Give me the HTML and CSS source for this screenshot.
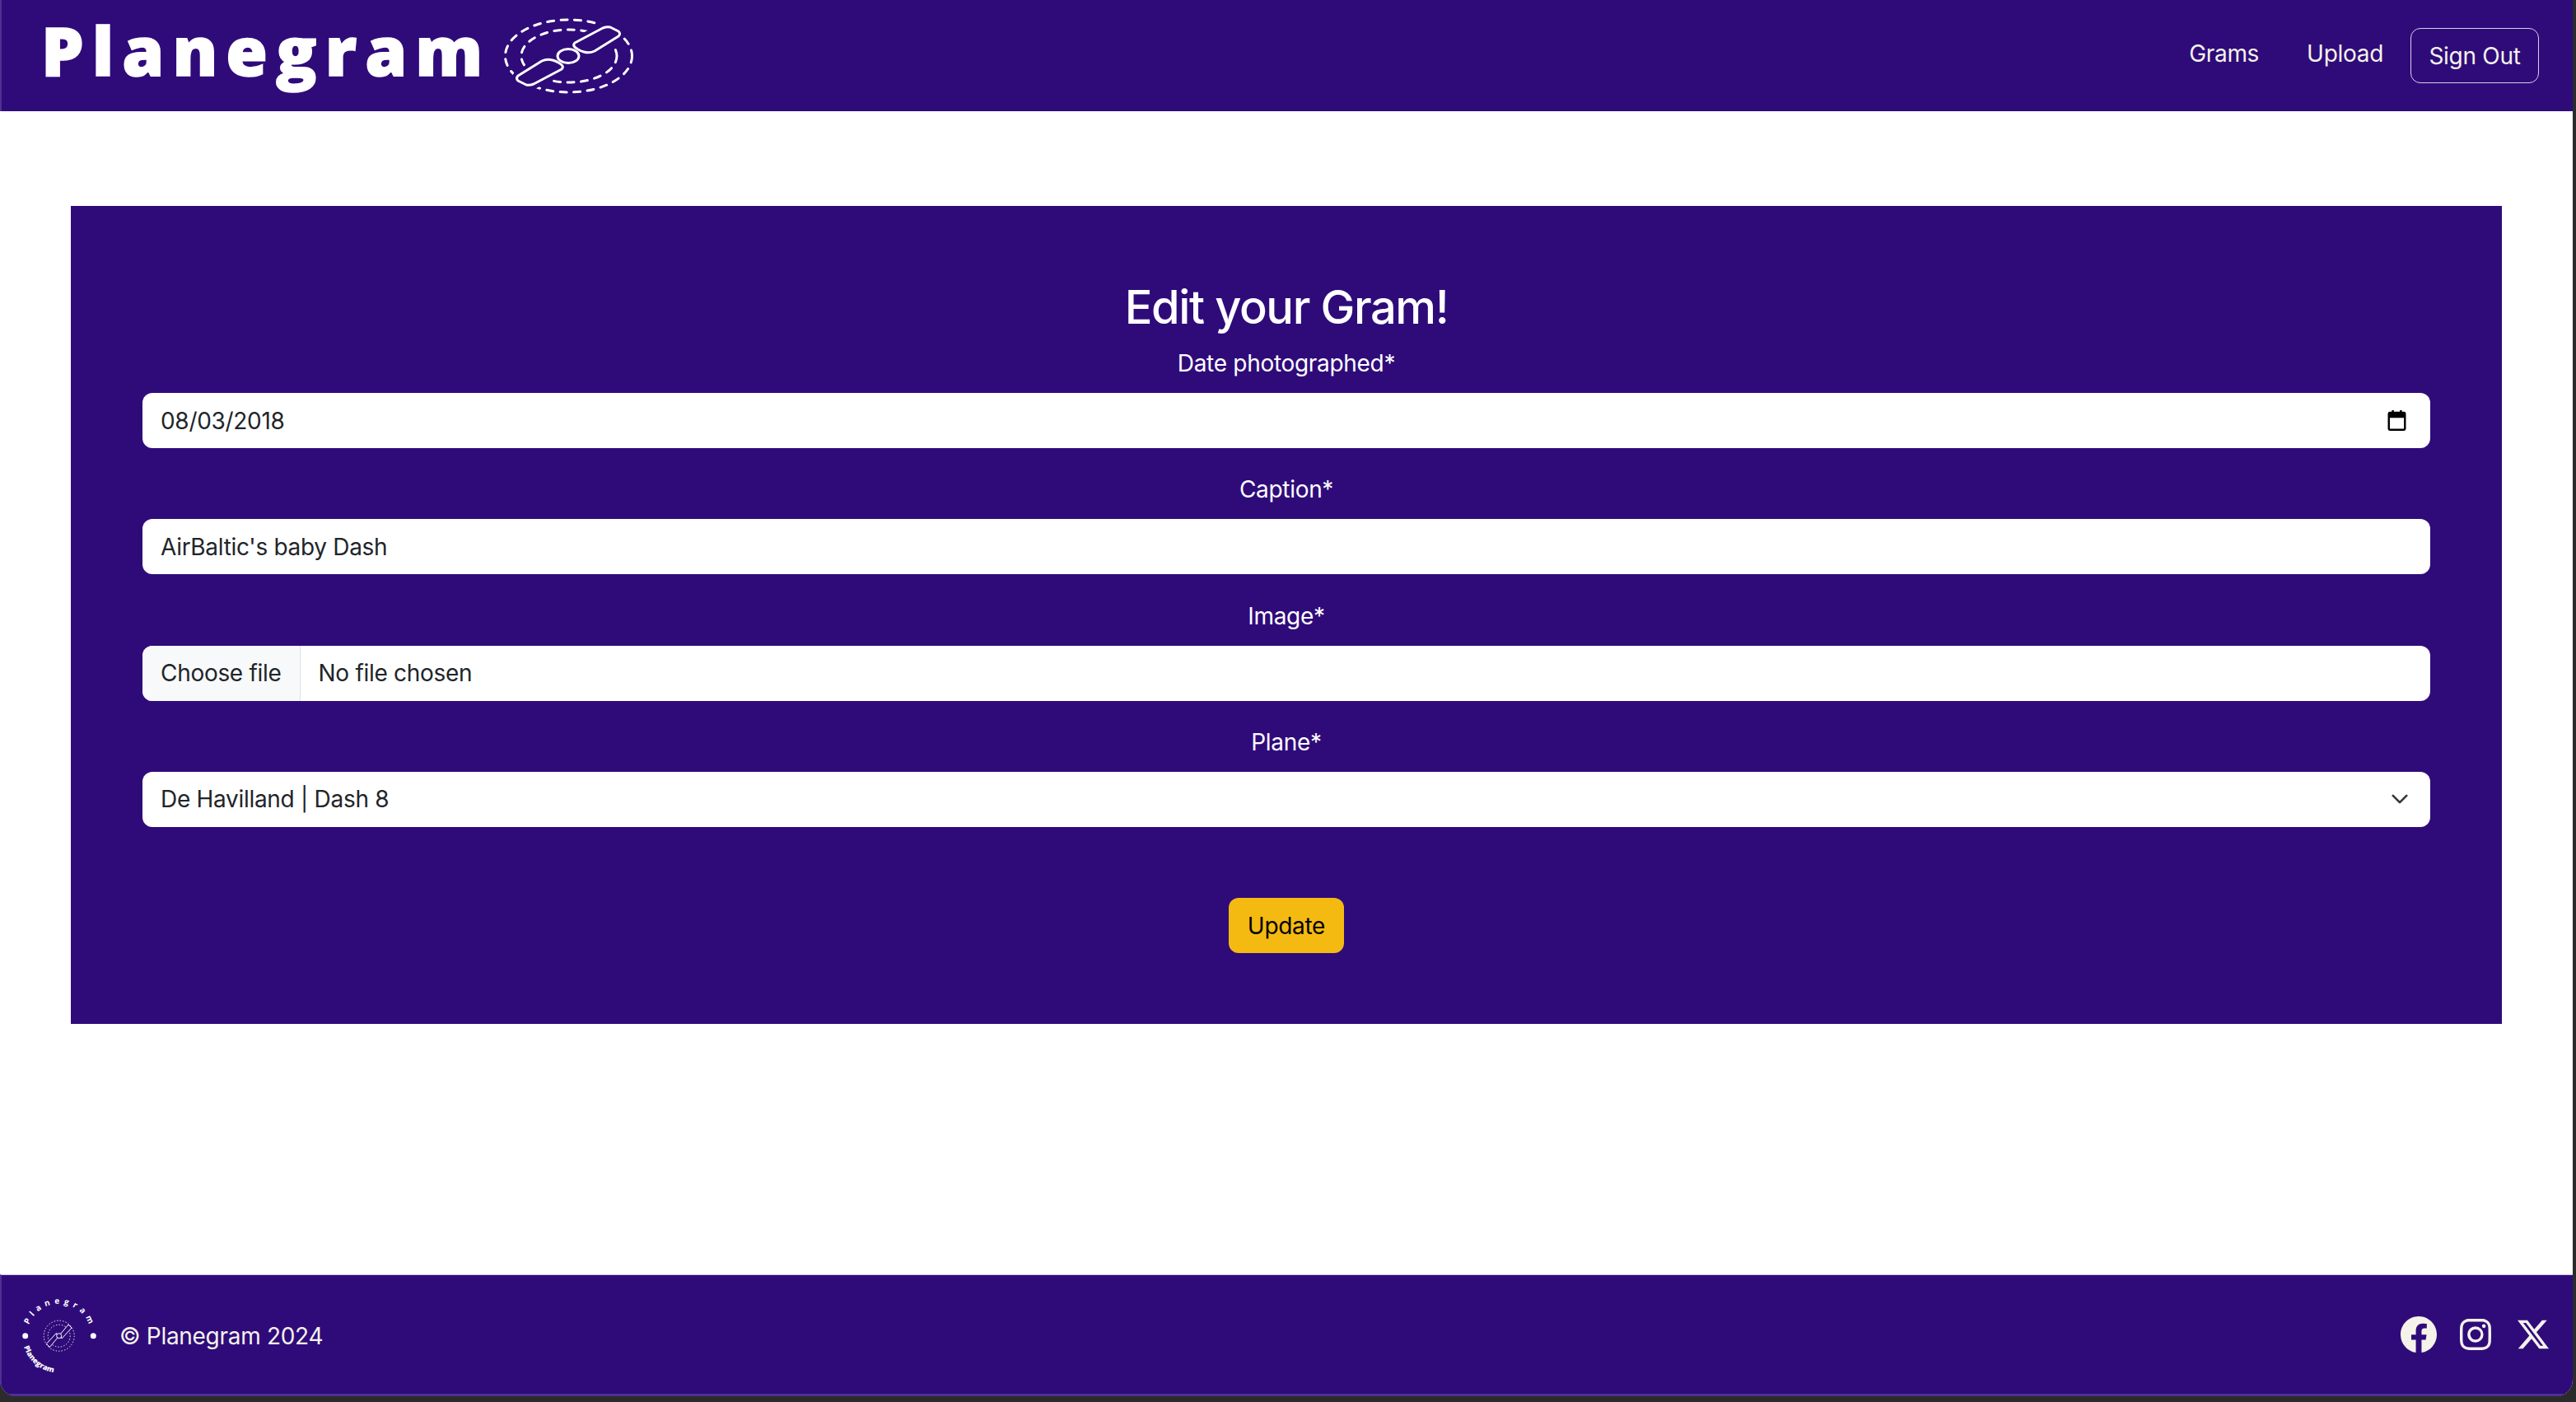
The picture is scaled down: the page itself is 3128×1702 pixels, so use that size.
FILE: index.html
```html
<!DOCTYPE html>
<html lang="en">
<head>
  <meta charset="UTF-8">
  <title>Planegram - Edit your Gram</title>
  <link rel="stylesheet" href="styles.css">
</head>
<body>
  <div class="window">
    <header class="navbar">
      <a class="brand" href="#">
        <span class="brand-text">Planegram</span>
        <svg class="brand-icon" viewBox="0 0 160 92" fill="none" stroke="#fff" stroke-width="3">
          <ellipse cx="80.500" cy="46" rx="77" ry="44" stroke-dasharray="8 8.500" stroke-linecap="round"/>
          <ellipse cx="81" cy="46" rx="58" ry="32" stroke-dasharray="8 8.500" stroke-linecap="round"/>
          <g stroke="#2f0b7a" stroke-width="12" fill="#2f0b7a">
            <path d="M92 38 Q84 34 88 30 L122 12 Q127 10 131 11 L141 16 Q144 19 141 22 L112 40 Q106 43 99 41 Q95 40 92 38Z"/>
            <path d="M68 54 Q76 58 72 62 L38 80 Q33 82 29 81 L19 76 Q16 73 19 70 L48 52 Q54 49 61 51 Q65 52 68 54Z"/>
          </g>
          <path stroke-linejoin="round" d="M92 38 Q84 34 88 30 L122 12 Q127 10 131 11 L141 16 Q144 19 141 22 L112 40 Q106 43 99 41 Q95 40 92 38"/>
          <path stroke-linejoin="round" d="M68 54 Q76 58 72 62 L38 80 Q33 82 29 81 L19 76 Q16 73 19 70 L48 52 Q54 49 61 51 Q65 52 68 54"/>
          <ellipse cx="80" cy="46" rx="13" ry="8.500"/>
        </svg>
      </a>
      <nav class="nav-links">
        <a class="nav-link" href="#">Grams</a>
        <a class="nav-link" href="#">Upload</a>
        <a class="btn-outline" href="#">Sign Out</a>
      </nav>
    </header>

    <main class="content">
      <section class="card">
        <h1>Edit your Gram!</h1>
        <form class="gram-form">
          <div class="field">
            <label for="date">Date photographed*</label>
            <div class="control">
              <span id="date">08/03/2018</span>
              <svg class="calendar" viewBox="3 1.500 18 20.500" fill="#000"><path d="M5 3h2V1.500h2V3h6V1.500h2V3h2a2 2 0 0 1 2 2v15a2 2 0 0 1-2 2H5a2 2 0 0 1-2-2V5a2 2 0 0 1 2-2zm0 6v11h14V9z"/></svg>
            </div>
          </div>
          <div class="field">
            <label for="caption">Caption*</label>
            <div class="control"><span id="caption">AirBaltic's baby Dash</span></div>
          </div>
          <div class="field">
            <label for="image">Image*</label>
            <div class="control control-file">
              <span class="file-btn" id="image">Choose file</span>
              <span class="file-name">No file chosen</span>
            </div>
          </div>
          <div class="field">
            <label for="plane">Plane*</label>
            <div class="control">
              <span id="plane">De Havilland | Dash 8</span>
              <svg class="chevron" viewBox="0 0 16 16" fill="none" stroke="#343a40" stroke-width="2" stroke-linecap="round" stroke-linejoin="round"><path d="m2 5 6 6 6-6"/></svg>
            </div>
          </div>
          <button class="btn-update" type="button">Update</button>
        </form>
      </section>
    </main>

    <footer class="footer">
      <div class="footer-left">
        <svg class="footer-logo" viewBox="0 0 110 110" fill="#fff">
          <defs>
            <path id="arcTop" d="M15.100 43.400 A39 39 0 0 1 88.300 43.400"/>
            <path id="arcBottom" d="M9 70 A45 45 0 0 0 58 101.300"/>
          </defs>
          <text class="arc-top"><textPath href="#arcTop">Planegram</textPath></text>
          <text class="arc-bottom"><textPath href="#arcBottom">Planegram</textPath></text>
          <circle cx="10.700" cy="56.700" r="3.500"/>
          <circle cx="93.300" cy="56.700" r="3.500"/>
          <g fill="none" stroke="#fff">
            <circle cx="51.700" cy="56.700" r="18.500" stroke-width="0.900" stroke-dasharray="1.500 2"/>
            <circle cx="51.700" cy="56.700" r="13.500" stroke-width="0.900" stroke-dasharray="1.500 2"/>
            <g stroke-width="1" fill="#2f0b7a">
              <path d="M53 55 L63 43 L67 47 L55 60 Z"/>
              <path d="M50.400 58.400 L40.400 70.400 L36.400 66.400 L48.400 53.400 Z"/>
              <circle cx="51.700" cy="56.700" r="3"/>
            </g>
          </g>
        </svg>
        <span class="copyright">© Planegram 2024</span>
      </div>
      <div class="socials">
        <svg class="social social-fb" viewBox="0 0 16 16" fill="#f5f2ea"><path d="M16 8.049c0-4.446-3.582-8.050-8-8.050C3.580 0-.002 3.603-.002 8.050c0 4.017 2.926 7.347 6.750 7.951v-5.625h-2.030V8.050H6.750V6.275c0-2.017 1.195-3.131 3.022-3.131.876 0 1.791.157 1.791.157v1.980h-1.009c-.993 0-1.303.621-1.303 1.258v1.510h2.218l-.354 2.326H9.250V16c3.824-.604 6.750-3.934 6.750-7.951"/></svg>
        <svg class="social" viewBox="0 0 16 16" fill="#f5f2ea"><path d="M8 0C5.829 0 5.556.010 4.703.048 3.850.088 3.269.222 2.760.420a3.900 3.900 0 0 0-1.417.923A3.900 3.900 0 0 0 .420 2.760C.222 3.268.087 3.850.048 4.700.010 5.555 0 5.827 0 8.001c0 2.172.010 2.444.048 3.297.040.852.174 1.433.372 1.942.205.526.478.972.923 1.417.444.445.890.719 1.416.923.510.198 1.090.333 1.942.372C5.555 15.990 5.827 16 8 16s2.444-.010 3.298-.048c.851-.040 1.434-.174 1.943-.372a3.900 3.900 0 0 0 1.416-.923c.445-.445.718-.891.923-1.417.197-.509.332-1.090.372-1.942C15.990 10.445 16 10.173 16 8s-.010-2.445-.048-3.299c-.040-.851-.175-1.433-.372-1.941a3.900 3.900 0 0 0-.923-1.417A3.900 3.900 0 0 0 13.240.420c-.510-.198-1.092-.333-1.943-.372C10.443.010 10.172 0 7.998 0zm-.717 1.442h.718c2.136 0 2.389.007 3.232.046.780.035 1.204.166 1.486.275.373.145.640.319.920.599s.453.546.598.920c.110.281.240.705.275 1.485.039.843.047 1.096.047 3.231s-.008 2.389-.047 3.232c-.035.780-.166 1.203-.275 1.485a2.500 2.500 0 0 1-.599.919c-.280.280-.546.453-.920.598-.280.110-.704.240-1.485.276-.843.038-1.096.047-3.232.047s-2.390-.009-3.233-.047c-.780-.036-1.203-.166-1.485-.276a2.500 2.500 0 0 1-.920-.598 2.500 2.500 0 0 1-.600-.920c-.109-.281-.240-.705-.275-1.485-.038-.843-.046-1.096-.046-3.233s.008-2.388.046-3.231c.036-.780.166-1.204.276-1.486.145-.373.319-.640.599-.920s.546-.453.920-.598c.282-.110.705-.240 1.485-.276.738-.034 1.024-.044 2.515-.045zm4.988 1.328a.960.960 0 1 0 0 1.920.960.960 0 0 0 0-1.920m-4.270 1.122a4.109 4.109 0 1 0 0 8.217 4.109 4.109 0 0 0 0-8.217m0 1.441a2.667 2.667 0 1 1 0 5.334 2.667 2.667 0 0 1 0-5.334"/></svg>
        <svg class="social social-x" viewBox="0 0 16 16" fill="#f5f2ea"><path d="M12.600.750h2.454l-5.360 6.142L16 15.250h-4.937l-3.867-5.070-4.425 5.070H.316l5.733-6.570L0 .750h5.063l3.495 4.633L12.601.750Zm-.860 13.028h1.360L4.323 2.145H2.865z"/></svg>
      </div>
    </footer>
  </div>
</body>
</html>
```

FILE: styles.css
```css
* {
  box-sizing: border-box;
}

html, body {
  margin: 0;
  height: 100%;
}

body {
  font-family: Inter, "Liberation Sans", sans-serif;
  font-size: 28px;
  letter-spacing: -0.3px;
  background: #2b2b2b;
}

a {
  color: inherit;
  text-decoration: none;
}

.window {
  display: flex;
  flex-direction: column;
  width: 3124px;
  height: 1695px;
  background: white;
  border-radius: 0 0 20px 20px;
  overflow: hidden;
}

.navbar {
  display: flex;
  align-items: center;
  justify-content: space-between;
  height: 135px;
  flex-shrink: 0;
  padding: 0 41px 0 48px;
  background: #2f0b7a;
  border-left: 2px solid #4f2f94;
  color: #f5f2ea;
}

.brand {
  display: flex;
  align-items: center;
  gap: 28px;
  color: white;
}

.brand-text {
  width: 532px;
  margin-bottom: 16px;
  font-family: "Open Sans", sans-serif;
  font-size: 82px;
  font-weight: 800;
  line-height: 1;
  letter-spacing: 10px;
  white-space: nowrap;
  -webkit-text-stroke: 1.500px white;
}

.brand-icon {
  width: 160px;
  height: 92px;
}

.nav-links {
  display: flex;
  align-items: center;
  gap: 33px;
}

.nav-link {
  margin-right: 25px;
  padding-bottom: 5px;
  line-height: 1;
}

.btn-outline {
  display: flex;
  align-items: center;
  justify-content: center;
  width: 156px;
  height: 67px;
  margin-left: -25px;
  border: 1.500px solid #d8d0e8;
  border-radius: 12px;
}

.content {
  flex: 1;
  padding: 115px 86px 0 86px;
}

.card {
  height: 993px;
  padding: 90px 87px 0;
  background: #2f0b7a;
  color: white;
  text-align: center;
}

.card h1 {
  margin: 0 0 14px;
  font-size: 56px;
  font-weight: 500;
  line-height: 66px;
  letter-spacing: -1.400px;
}

.gram-form {
  display: flex;
  flex-direction: column;
  align-items: center;
}

.field {
  width: 100%;
  margin-bottom: 29.330px;
}

.field label {
  display: block;
  margin-bottom: 15px;
  line-height: 42px;
}

.control {
  display: flex;
  align-items: center;
  justify-content: space-between;
  height: 67px;
  padding: 0 22px;
  background: white;
  border-radius: 12px;
  color: #212529;
  text-align: left;
}

.control-file {
  justify-content: flex-start;
  padding: 0;
  overflow: hidden;
}

.file-btn {
  display: flex;
  align-items: center;
  height: 100%;
  padding: 0 22px;
  background: #f8f9fa;
  border-right: 1px solid #dee2e6;
}

.file-name {
  padding-left: 22px;
}

.calendar {
  width: 23px;
  height: 25px;
  margin-right: 7px;
}

.chevron {
  width: 22px;
  height: 22px;
  margin-right: 4px;
}

.btn-update {
  width: 140px;
  height: 67px;
  margin-top: 57px;
  padding: 0;
  background: #f5ba12;
  border: none;
  border-radius: 12px;
  color: black;
  font: inherit;
  letter-spacing: inherit;
}

.footer {
  display: flex;
  align-items: center;
  justify-content: space-between;
  height: 148px;
  flex-shrink: 0;
  padding: 0 29px 0 18px;
  background: #2f0b7a;
  border-top: 1px solid #cfc8e0;
  border-left: 2px solid #4f2f94;
  border-bottom: 3px solid #4f2f94;
  color: #f5f2ea;
}

.footer-left {
  display: flex;
  align-items: center;
  gap: 15px;
}

.footer-logo {
  width: 110px;
  height: 110px;
}

.arc-top {
  font-family: "Open Sans", sans-serif;
  font-size: 10px;
  font-weight: 700;
  letter-spacing: 5px;
}

.arc-bottom {
  font-family: "Open Sans", sans-serif;
  font-size: 9px;
  font-weight: 800;
  letter-spacing: 0;
}

.copyright {
  padding-top: 4px;
}

.socials {
  display: flex;
  align-items: center;
  gap: 28px;
}

.social {
  width: 38px;
  height: 38px;
}

.social-fb {
  width: 44px;
  height: 44px;
}

.social-x {
  margin-left: 4px;
}
```
